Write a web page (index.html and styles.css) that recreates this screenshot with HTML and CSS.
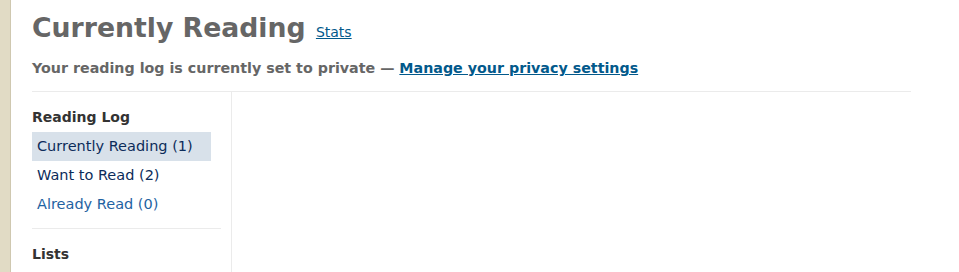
FILE: index.html
```html
<!DOCTYPE html>
<html>
<head>
<meta charset="utf-8">
<link rel="stylesheet" href="styles.css">
</head>
<body>
<div class="page">
  <div class="strip"></div>
  <main class="content">
    <header class="head">
      <h1 class="title">Currently Reading <a class="stats" href="#">Stats</a></h1>
      <p class="privacy">Your reading log is currently set to private — <a class="privacy-link" href="#">Manage your privacy settings</a></p>
    </header>
    <div class="body">
      <aside class="sidebar">
        <h2 class="side-title">Reading Log</h2>
        <ul class="side-list">
          <li><a class="side-item active" href="#">Currently Reading (1)</a></li>
          <li><a class="side-item" href="#">Want to Read (2)</a></li>
          <li><a class="side-item fresh" href="#">Already Read (0)</a></li>
        </ul>
        <div class="side-sep"></div>
        <h2 class="side-title lists">Lists</h2>
      </aside>
      <section class="main"></section>
    </div>
  </main>
</div>
</body>
</html>
```
FILE: styles.css
```css
html, body {
  margin: 0;
  padding: 0;
  background: #fff;
  font-family: "DejaVu Sans", Verdana, sans-serif;
}
.page {
  display: flex;
  min-height: 272px;
}
.strip {
  width: 10px;
  flex: none;
  background: #e1dbc5;
  border-right: 1px solid #cfc8b0;
}
.content {
  flex: 1;
  display: flex;
  flex-direction: column;
  padding: 0 48px 0 21px;
}
.head {
  border-bottom: 1px solid #ebebeb;
  padding-bottom: 14px;
}
.title {
  margin: 0;
  padding-top: 10px;
  font-size: 26.7px;
  font-weight: bold;
  color: #666;
  line-height: 36px;
}
.stats {
  font-size: 14px;
  font-weight: normal;
  color: #02598b;
  margin-left: 1px;
}
.privacy {
  margin: 9px 0 0;
  font-size: 14.25px;
  font-weight: bold;
  color: #666;
  line-height: 18px;
}
.privacy-link {
  color: #02598b;
}
.body {
  flex: 1;
  display: flex;
}
.sidebar {
  width: 189px;
  padding-right: 10px;
  border-right: 1px solid #ebebeb;
  padding-top: 15px;
}
.side-title {
  margin: 0;
  font-size: 14px;
  font-weight: bold;
  color: #333;
  line-height: 20px;
}
.side-list {
  list-style: none;
  margin: 5px 0 0;
  padding: 0;
}
.side-item {
  display: block;
  width: 169px;
  padding: 5px 5px;
  font-size: 14.5px;
  line-height: 19px;
  color: #0c2c5a;
  text-decoration: none;
}
.side-item.active {
  background: #d8e1ea;
}
.side-item.fresh {
  color: #1f63a2;
}
.side-sep {
  border-top: 1px solid #ebebeb;
  margin-top: 9px;
}
.side-title.lists {
  margin-top: 15px;
}
.main {
  flex: 1;
}
```
